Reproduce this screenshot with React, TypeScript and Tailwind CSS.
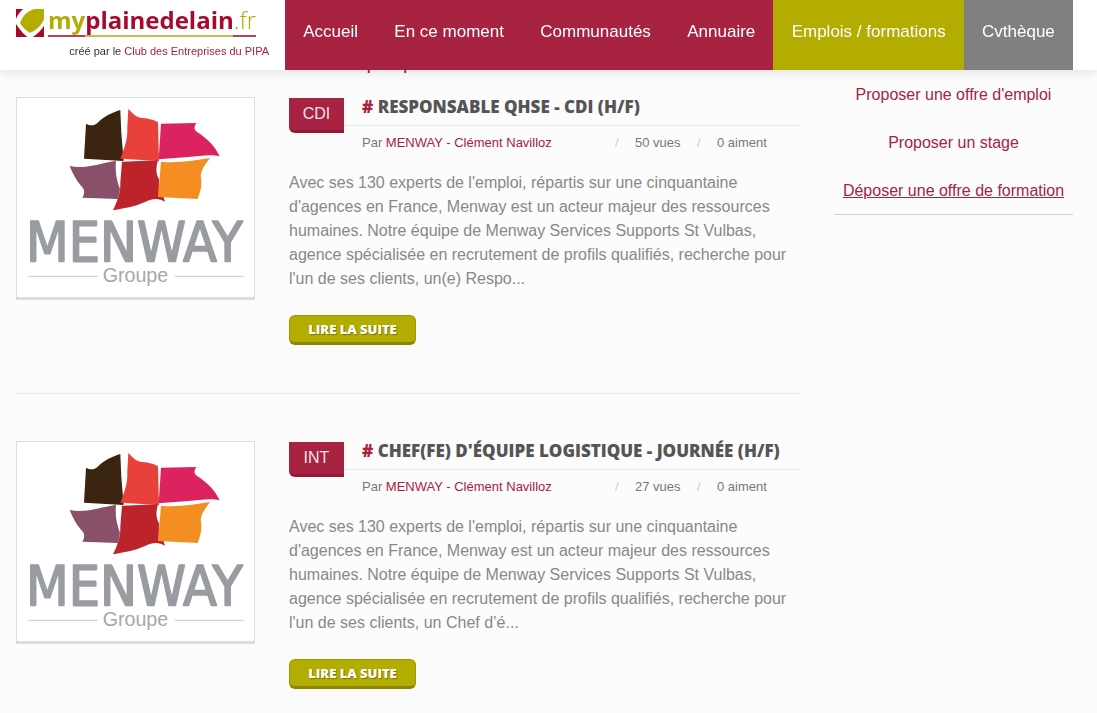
type Offer = {
  badge: string;
  title: string;
  views: string;
  text: string;
};

const offers: Offer[] = [
  {
    badge: "CDI",
    title: "RESPONSABLE QHSE - CDI (H/F)",
    views: "50 vues",
    text: "Avec ses 130 experts de l'emploi, répartis sur une cinquantaine d'agences en France, Menway est un acteur majeur des ressources humaines. Notre équipe de Menway Services Supports St Vulbas, agence spécialisée en recrutement de profils qualifiés, recherche pour l'un de ses clients, un(e) Respo...",
  },
  {
    badge: "INT",
    title: "CHEF(FE) D'ÉQUIPE LOGISTIQUE - JOURNÉE (H/F)",
    views: "27 vues",
    text: "Avec ses 130 experts de l'emploi, répartis sur une cinquantaine d'agences en France, Menway est un acteur majeur des ressources humaines. Notre équipe de Menway Services Supports St Vulbas, agence spécialisée en recrutement de profils qualifiés, recherche pour l'un de ses clients, un Chef d’é...",
  },
];

const navItems = [
  { label: "Accueil", color: "bg-[#a82241]" },
  { label: "En ce moment", color: "bg-[#a82241]" },
  { label: "Communautés", color: "bg-[#a82241]" },
  { label: "Annuaire", color: "bg-[#a82241]" },
  { label: "Emplois / formations", color: "bg-[#b2ad00]" },
  { label: "Cvthèque", color: "bg-[#808080]" },
];

function SiteMark() {
  return (
    <svg viewBox="0 0 84 84" className="mt-px size-7 shrink-0" aria-hidden="true">
      <path d="M0 0H21C12 9 4 18 0 30Z" fill="#a80a2c" />
      <path d="M0 45C8 58 19 72 34 84H0Z" fill="#a80a2c" />
      <path d="M84 50V84H50C64 75 76 63 84 50Z" fill="#a80a2c" />
      <path d="M84 0V30C78 48 62 63 42 72C29 64 18 54 12 42C19 22 34 5 56 0Z" fill="#b2ad00" />
    </svg>
  );
}

function MenwayLogo() {
  return (
    <svg viewBox="21 24 711 597" className="block w-full" role="img" aria-label="Menway Groupe">
      <path d="M228 101C240 107 250 109 263 98C284 78 305 68 331 60L334 130L341 213L222 206Z" fill="#3b2410" />
      <path d="M355 57C370 72 377 82 398 84C417 86 431 89 444 97L447 213L331 206C347 165 353 145 352 110Z" fill="#e8413b" />
      <path d="M453 101L559 99C551 112 552 119 561 126C593 146 614 168 629 199C604 192 568 198 535 201L446 208Z" fill="#dc2360" />
      <path d="M179 228C220 238 262 222 318 212C315 245 320 270 330 297L324 327L217 323C226 308 224 298 213 287C199 271 188 251 179 228Z" fill="#885169" />
      <path d="M336 215L444 211C437 235 438 252 447 268L446 319L461 322L465 336C445 323 427 326 405 336C374 350 350 353 309 361C325 329 332 303 331 277Z" fill="#bd232a" />
      <path d="M453 215C502 220 548 212 600 204C583 226 574 241 572 257C578 284 571 305 563 327L444 321Z" fill="#f58e22" />
      <text
        x="48"
        y="512"
        fontSize="165"
        fill="#999ca0"
        stroke="#999ca0"
        strokeWidth="5"
        strokeLinejoin="round"
        className="font-['DejaVu_Sans_Condensed','DejaVu_Sans',sans-serif]"
      >
        MENWAY
      </text>
      <path d="M54 559H263M494 559H702" stroke="#d4d5d6" strokeWidth="4" />
      <text x="278" y="576" fontSize="59" fill="#a5a8ab" className="font-['Liberation_Sans',sans-serif]">
        Groupe
      </text>
    </svg>
  );
}

function Header() {
  return (
    <header className="fixed inset-x-0 top-0 z-10 flex h-[70px] bg-white pr-6 shadow-[0_0_12px_rgba(0,0,0,0.15)]">
      <div className="w-[285px] shrink-0 pt-2 pl-4">
        <a href="#" className="flex gap-1">
          <SiteMark />
          <span className="flex flex-col gap-1">
            <span className="font-['Open_Sans',sans-serif] text-2xl leading-[23px] font-bold text-[#b2ad00]">
              my<span className="text-[#a80a2c]">plainedelain</span>
              <span className="font-light">.fr</span>
            </span>
            <span className="flex h-0.5">
              <span className="w-[18%] bg-[#c0405a]" />
              <span className="grow bg-[#c4bd55]" />
              <span className="w-[11%] bg-[#c0405a]" />
            </span>
          </span>
        </a>
        <p className="pt-1 pr-4 text-right text-[11px] leading-5 text-[#333]">
          créé par le{" "}
          <a href="#" className="text-[#a82241]">
            Club des Entreprises du PIPA
          </a>
        </p>
      </div>
      <nav className="flex grow">
        {navItems.map((item) => (
          <a
            key={item.label}
            href="#"
            className={`flex-auto pt-5 text-center text-[17px] leading-6 whitespace-nowrap text-white ${item.color}`}
          >
            {item.label}
          </a>
        ))}
      </nav>
    </header>
  );
}

function OfferRow({ offer }: { offer: Offer }) {
  return (
    <article className="grid grid-cols-[239fr_511fr] items-start gap-x-[34px]">
      <a href="#" className="border border-b-3 border-[#dcdcdc] bg-white">
        <MenwayLogo />
      </a>
      <div>
        <div className="flex items-start">
          <span className="mt-px h-[35px] w-[55px] shrink-0 rounded-bl-md border-b-3 border-[#8f1c37] bg-[#a82241] text-center leading-8 text-[#f3e4e8]">
            {offer.badge}
          </span>
          <div className="grow">
            <h2 className="border-b border-[#ebebeb] pb-2 pl-[18px] font-['Open_Sans',sans-serif] text-[17px] leading-5 font-extrabold whitespace-nowrap text-[#555]">
              <span className="text-[#a82241]">#</span> {offer.title}
            </h2>
            <div className="flex pt-2 pl-[18px] text-[13px] leading-[18px] text-[#777]">
              <p className="w-[253px]">
                Par{" "}
                <a href="#" className="text-[#a82241]">
                  MENWAY - Clément Navilloz
                </a>
              </p>
              <span className="w-5 text-[#ccc]">/</span>
              <span className="w-[62px]">{offer.views}</span>
              <span className="w-5 text-[#ccc]">/</span>
              <span>0 aiment</span>
            </div>
          </div>
        </div>
        <p className="pt-[19px] leading-6 text-[#888]">{offer.text}</p>
        <button
          type="button"
          className="mt-6 block h-[30px] w-[127px] rounded-md border border-b-3 border-[#9b9700] border-b-[#8a8600] bg-[#b2ad00] font-['Open_Sans',sans-serif] text-[13px] leading-6 font-extrabold text-white [text-shadow:1px_1px_1px_rgba(0,0,0,0.3)]"
        >
          LIRE LA SUITE
        </button>
      </div>
    </article>
  );
}

export default function App() {
  return (
    <div className="min-h-screen bg-[#fcfcfc] font-['Liberation_Sans',Arial,sans-serif] text-base">
      <Header />
      <div className="grid grid-cols-[784fr_239fr] items-start gap-x-[34px] pt-[50px] pr-6 pl-4">
        <main>
          <div className="grid grid-cols-[239fr_511fr] gap-x-[34px] pb-[23px]">
            <h1 className="col-start-2 text-xl leading-6 text-[#a82241]">Offre emploi par date</h1>
          </div>
          {offers.map((offer, i) => (
            <div key={offer.title} className={i > 0 ? "mt-12 border-t border-[#e8e8e8] pt-[47px]" : ""}>
              <OfferRow offer={offer} />
            </div>
          ))}
        </main>
        <aside className="mt-[33px] flex flex-col gap-6 border-b border-[#d2d2d2] pb-[11px] text-center leading-6 text-[#a82241]">
          <a href="#">Proposer une offre d'emploi</a>
          <a href="#">Proposer un stage</a>
          <a href="#" className="underline">
            Déposer une offre de formation
          </a>
        </aside>
      </div>
    </div>
  );
}
